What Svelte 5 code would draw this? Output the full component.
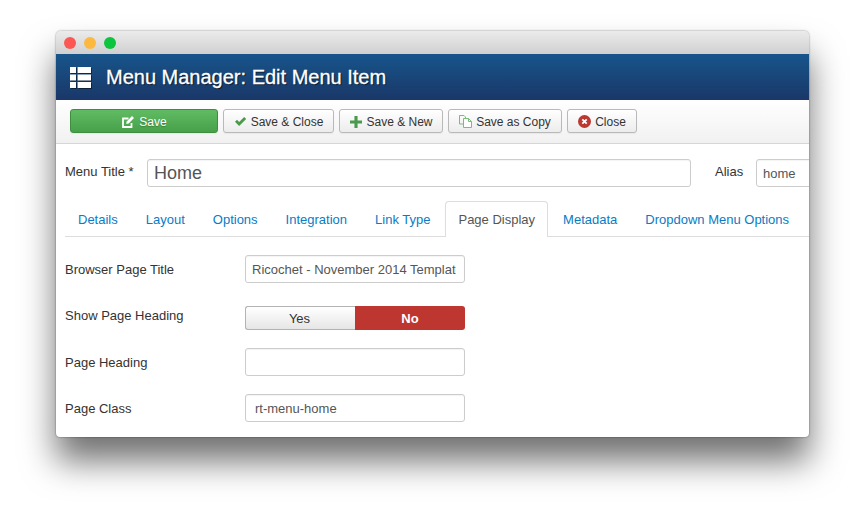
<script>
  const tabs = ['Details', 'Layout', 'Options', 'Integration', 'Link Type', 'Page Display', 'Metadata', 'Dropdown Menu Options'];
  let active = 'Page Display';
</script>

<div class="page">
  <div class="window">
    <div class="titlebar">
      <span class="dot red"></span>
      <span class="dot yellow"></span>
      <span class="dot green"></span>
    </div>

    <header class="header">
      <svg class="menu-icon" width="21" height="21" viewBox="0 0 21 21">
        <g fill="#fff">
          <rect x="0" y="0" width="6" height="6" />
          <rect x="7.6" y="0" width="13.4" height="6" />
          <rect x="0" y="7.5" width="6" height="6" />
          <rect x="7.6" y="7.5" width="13.4" height="6" />
          <rect x="0" y="15" width="6" height="6" />
          <rect x="7.6" y="15" width="13.4" height="6" />
        </g>
      </svg>
      <h1>Menu Manager: Edit Menu Item</h1>
    </header>

    <div class="toolbar">
      <button class="btn save">
        <svg width="14" height="14" viewBox="0 0 14 14">
          <path d="M10.5 8v4H2V3.5h5.5" fill="none" stroke="#fff" stroke-width="1.8" />
          <path d="M5.2 9l.5-2.6 5.3-5.3 2 2-5.3 5.4z" fill="#fff" />
        </svg>
        Save
      </button>
      <button class="btn close-save">
        <svg width="13" height="11" viewBox="0 0 14 12">
          <path d="M1 6.3l2.2-2.2 2.3 2.4L11 1l2.2 2.2L5.5 11z" fill="#4a9a4c" />
        </svg>
        Save &amp; Close
      </button>
      <button class="btn save-new">
        <svg width="12" height="12" viewBox="0 0 13 13">
          <path d="M4.8 0h3.4v4.8H13v3.4H8.2V13H4.8V8.2H0V4.8h4.8z" fill="#4a9a4c" />
        </svg>
        Save &amp; New
      </button>
      <button class="btn save-copy">
        <svg width="13" height="13" viewBox="0 0 13 13">
          <path d="M.5.5h4.5l1.5 1.5v7h-6z" fill="none" stroke="#7bbb7d" />
          <path d="M4.5 3.5h5l3 3v6h-8z" fill="#fff" stroke="#7bbb7d" />
          <path d="M9.5 3.5v3h3" fill="none" stroke="#7bbb7d" />
        </svg>
        Save as Copy
      </button>
      <button class="btn close">
        <svg width="13" height="13" viewBox="0 0 13 13">
          <circle cx="6.5" cy="6.5" r="6.5" fill="#bd362f" />
          <path d="M4.3 4.3l4.4 4.4M8.7 4.3l-4.4 4.4" stroke="#fff" stroke-width="1.8" />
        </svg>
        Close
      </button>
    </div>

    <main class="content">
      <div class="title-row">
        <label class="title-label" for="title">Menu Title *</label>
        <input id="title" class="title-input" value="Home" />
        <label class="alias-label" for="alias">Alias</label>
        <input id="alias" class="alias-input" value="home" />
      </div>

      <nav class="tabs">
        {#each tabs as tab}
          <span class="tab" class:active={tab == active}>{tab}</span>
        {/each}
      </nav>

      <div class="form">
        <div class="row">
          <span class="label">Browser Page Title</span>
          <input class="field clipped" value="Ricochet - November 2014 Template" />
        </div>
        <div class="row toggle-row">
          <span class="label">Show Page Heading</span>
          <div class="toggle">
            <span class="yes">Yes</span>
            <span class="no">No</span>
          </div>
        </div>
        <div class="row">
          <span class="label">Page Heading</span>
          <input class="field" value="" />
        </div>
        <div class="row">
          <span class="label">Page Class</span>
          <input class="field wide-pad" value="rt-menu-home" />
        </div>
      </div>
    </main>
  </div>
</div>

<style>
  :global(body) {
    margin: 0;
    background: #fff;
    font-family: "Liberation Sans", Arial, sans-serif;
  }
  .page {
    height: 517px;
    box-sizing: border-box;
    padding: 31px 0 0 56px;
    overflow: hidden;
  }
  .window {
    width: 753px;
    height: 406px;
    border-radius: 5px 5px 4px 4px;
    background: #fff;
    overflow: hidden;
    box-shadow: 0 24px 34px rgba(0, 0, 0, 0.56), 0 0 2px rgba(0, 0, 0, 0.5);
    color: #333;
  }
  .titlebar {
    height: 23px;
    box-sizing: border-box;
    padding-left: 8px;
    display: flex;
    align-items: center;
    gap: 8px;
    background: linear-gradient(#ebebeb, #d0d0d0);
  }
  .dot {
    width: 12px;
    height: 12px;
    border-radius: 50%;
  }
  .red { background: #fc5753; }
  .yellow { background: #fdb93f; }
  .green { background: #0dc43e; }
  .header {
    height: 46px;
    box-sizing: border-box;
    display: flex;
    align-items: center;
    padding-left: 14px;
    background: linear-gradient(#17558b, #1a3768);
  }
  .menu-icon {
    margin-right: 15px;
    filter: drop-shadow(1px 1px 0 rgba(0, 0, 0, 0.45));
  }
  h1 {
    margin: 0;
    font-size: 20px;
    font-weight: 400;
    color: #fff;
    -webkit-text-stroke: 0.3px #fff;
    text-shadow: 1px 1px 1px rgba(0, 0, 0, 0.7);
  }
  .toolbar {
    height: 44px;
    box-sizing: border-box;
    display: flex;
    align-items: flex-start;
    gap: 5px;
    padding: 9px 0 0 14px;
    background: linear-gradient(#fff, #f1f1f1);
    border-bottom: 1px solid #d6d6d6;
  }
  .btn {
    height: 24px;
    box-sizing: border-box;
    display: flex;
    align-items: center;
    justify-content: center;
    gap: 4px;
    padding: 1px 0 0;
    font: 12px "Liberation Sans", Arial, sans-serif;
    color: #333;
    border: 1px solid #b9b9b9;
    border-radius: 3px;
    background: linear-gradient(#fff, #ececec);
    box-shadow: 0 1px 1px rgba(0, 0, 0, 0.05);
  }
  .btn.save {
    width: 148px;
    gap: 4px;
    color: #fff;
    border-color: #3f8d41;
    background: linear-gradient(#60bc63, #47a04a);
    text-shadow: 0 1px 1px rgba(0, 0, 0, 0.25);
  }
  .close-save { width: 111px; }
  .save-new { width: 104px; padding-left: 1px; }
  .save-copy { width: 114px; }
  .close { width: 70px; }
  .content {
    padding: 15px 0 0 9px;
    font-size: 13px;
  }
  .title-row {
    display: flex;
    align-items: flex-start;
    height: 42px;
  }
  .title-label {
    width: 82px;
    flex: none;
    padding-top: 5px;
  }
  input {
    box-sizing: border-box;
    height: 28px;
    margin: 0;
    padding: 0 6px;
    border: 1px solid #ccc;
    border-radius: 3px;
    background: #fff;
    color: #555;
    font: 13px "Liberation Sans", Arial, sans-serif;
    box-shadow: inset 0 1px 1px rgba(0, 0, 0, 0.05);
    outline: none;
  }
  .title-input {
    width: 544px;
    flex: none;
    font-size: 18px;
  }
  .alias-label {
    flex: none;
    margin-left: 24px;
    width: 41px;
    padding-top: 5px;
  }
  .alias-input {
    width: 70px;
    flex: none;
  }
  .tabs {
    display: flex;
    height: 36px;
    box-sizing: border-box;
    gap: 2px;
    border-bottom: 1px solid #ddd;
  }
  .tab {
    box-sizing: border-box;
    height: 36px;
    padding: 10px 12px 0;
    line-height: 15px;
    color: #0a7bc4;
    border: 1px solid transparent;
    border-bottom: 0;
    white-space: nowrap;
  }
  .tab.active {
    color: #555;
    background: #fff;
    border-color: #ddd;
    border-radius: 4px 4px 0 0;
  }
  .form {
    padding-top: 18px;
  }
  .row {
    display: flex;
    align-items: flex-start;
    height: 46px;
  }
  .label {
    width: 180px;
    flex: none;
    padding-top: 7px;
    line-height: 15px;
  }
  .field {
    width: 220px;
  }
  .clipped {
    padding-right: 8px;
  }
  .wide-pad {
    padding-left: 9px;
  }
  .toggle-row {
    height: 47px;
    padding-top: 5px;
    box-sizing: border-box;
  }
  .toggle-row .label {
    padding-top: 2px;
  }
  .toggle {
    display: flex;
    width: 220px;
    height: 24px;
    font-size: 13px;
    line-height: 25px;
    text-align: center;
  }
  .yes {
    box-sizing: border-box;
    width: 110px;
    line-height: 22px;
    padding: 1px 2px 0 0;
    border: 1px solid #b3b3b3;
    border-right: 0;
    border-radius: 3px 0 0 3px;
    background: linear-gradient(#fff, #e6e6e6);
  }
  .no {
    width: 110px;
    font-weight: 700;
    color: #fff;
    background: #bd362f;
    border-radius: 0 3px 3px 0;
  }
</style>
